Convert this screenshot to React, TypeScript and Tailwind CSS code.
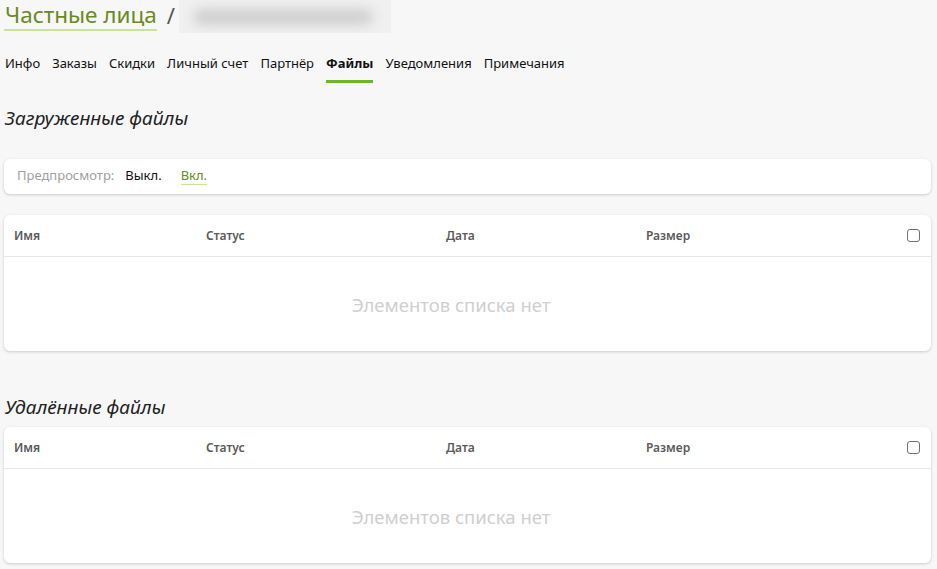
import React from 'react';

const tabs = ['Инфо', 'Заказы', 'Скидки', 'Личный счет', 'Партнёр', 'Файлы', 'Уведомления', 'Примечания'];

function FilesTable() {
  return (
    <div className="w-[927px] rounded-md bg-white shadow-[0_1px_3px_rgba(0,0,0,0.18)]">
      <div className="flex h-[42px] items-center border-b border-[#e8e8e8] pl-[10px] pr-[11px] pt-[1px] text-[12px] font-semibold text-[#5a5a5a]">
        <div className="w-[192px]">Имя</div>
        <div className="w-[240px]">Статус</div>
        <div className="w-[200px]">Дата</div>
        <div className="flex-1">Размер</div>
        <div className="h-[13px] w-[13px] rounded-[3px] border border-[#707070] bg-white" />
      </div>
      <div className="flex h-[94px] items-center justify-center pr-[33px] pt-[2px] text-[18.5px] text-[#cfcfcf]">
        Элементов списка нет
      </div>
    </div>
  );
}

export default function App() {
  return (
    <div className="min-h-[569px] w-[937px] bg-[#f7f7f7] pl-[4px] font-['Noto_Sans',sans-serif] text-[#222]">
      {/* Header */}
      <div className="flex h-[33px] items-start">
        <h1 className="mt-[1px] border-b-2 border-[#c9e39b] pl-[1px] text-[22.5px] leading-[28px] text-[#6a8a22]">
          Частные лица
        </h1>
        <span className="ml-[10px] mt-[1px] text-[22px] leading-[28px] text-[#555]">/</span>
        <div className="ml-[4px] h-[33px] w-[212px] overflow-hidden bg-[#f0f0f0]">
          <div className="mx-[14px] mt-[9px] h-[16px] w-[180px] rounded-full bg-[#cfcfcf] blur-[6px]" />
        </div>
      </div>

      {/* Tabs */}
      <div className="mt-[21px] flex gap-[12px] pl-[1px] text-[13px] text-[#111]">
        {tabs.map((t) => (
          <div key={t} className="flex flex-col">
            <span className={t === 'Файлы' ? 'font-bold' : ''}>{t}</span>
            <div className={`mt-[6px] h-[3px] ${t === 'Файлы' ? 'bg-[#69b828]' : ''}`} />
          </div>
        ))}
      </div>

      <h2 className="mt-[21px] pl-[1px] text-[19px] italic leading-[28px] text-[#222]">Загруженные файлы</h2>

      {/* Preview toggle */}
      <div className="mt-[27px] flex h-[35px] w-[927px] items-center rounded-md bg-white pl-[13px] text-[13px] shadow-[0_1px_3px_rgba(0,0,0,0.18)]">
        <span className="text-[#a0a0a0]">Предпросмотр:</span>
        <span className="ml-[11px] text-[#111]">Выкл.</span>
        <span className="ml-[19px] border-b border-[#c9e39b] leading-[17px] text-[#6a8a22]">Вкл.</span>
      </div>

      <div className="mt-[21px]">
        <FilesTable />
      </div>

      <h2 className="mt-[42px] pl-[1px] text-[19px] italic leading-[28px] text-[#222]">Удалённые файлы</h2>

      <div className="mt-[6px]">
        <FilesTable />
      </div>
    </div>
  );
}
